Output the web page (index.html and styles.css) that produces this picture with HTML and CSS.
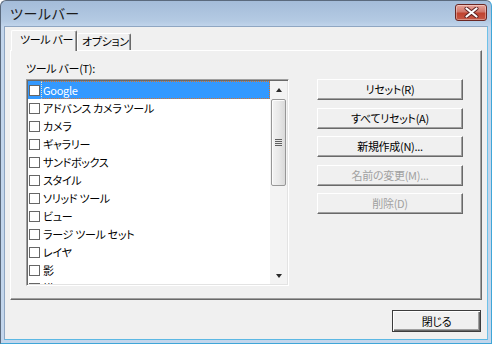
FILE: index.html
```html
<!DOCTYPE html>
<html lang="ja">
<head>
<meta charset="utf-8">
<link rel="stylesheet" href="styles.css">
</head>
<body>
<div class="window">
  <div class="titlebar">
    <span class="title">ツールバー</span>
    <div class="close">
      <svg width="15" height="11" viewBox="0 0 15 11">
        <path d="M2.5 1.5 L12.5 9.5 M12.5 1.5 L2.5 9.5" stroke="#5a2020" stroke-width="4" stroke-linecap="round"/>
        <path d="M2.5 1.5 L12.5 9.5 M12.5 1.5 L2.5 9.5" stroke="#ffffff" stroke-width="2.2" stroke-linecap="round"/>
      </svg>
    </div>
  </div>
  <div class="client">
    <div class="tabs">
      <div class="tab active">ツール バー</div>
      <div class="tab">オプション</div>
    </div>
    <div class="panel">
      <div class="leftcol">
        <div class="label">ツール バー(T):</div>
        <div class="listbox">
          <div class="items">
            <div class="row selected"><span class="cb"></span><span class="txt">Google</span></div>
            <div class="row"><span class="cb"></span><span class="txt">アドバンス カメラ ツール</span></div>
            <div class="row"><span class="cb"></span><span class="txt">カメラ</span></div>
            <div class="row"><span class="cb"></span><span class="txt">ギャラリー</span></div>
            <div class="row"><span class="cb"></span><span class="txt">サンドボックス</span></div>
            <div class="row"><span class="cb"></span><span class="txt">スタイル</span></div>
            <div class="row"><span class="cb"></span><span class="txt">ソリッド ツール</span></div>
            <div class="row"><span class="cb"></span><span class="txt">ビュー</span></div>
            <div class="row"><span class="cb"></span><span class="txt">ラージ ツール セット</span></div>
            <div class="row"><span class="cb"></span><span class="txt">レイヤ</span></div>
            <div class="row"><span class="cb"></span><span class="txt">影</span></div>
            <div class="row"><span class="cb"></span><span class="txt">描画</span></div>
          </div>
          <div class="scrollbar">
            <div class="arrow"><span class="tri up"></span></div>
            <div class="track">
              <div class="thumb"><span class="grip"></span></div>
            </div>
            <div class="arrow"><span class="tri down"></span></div>
          </div>
        </div>
      </div>
      <div class="buttons">
        <div class="btn">リセット(R)</div>
        <div class="btn">すべてリセット(A)</div>
        <div class="btn">新規作成(N)...</div>
        <div class="btn disabled">名前の変更(M)...</div>
        <div class="btn disabled">削除(D)</div>
      </div>
    </div>
    <div class="footer">
      <div class="btn default">閉じる</div>
    </div>
  </div>
</div>
</body>
</html>
```
FILE: styles.css
```css
* { box-sizing: border-box; }
html, body { margin: 0; padding: 0; }
body {
  width: 492px;
  height: 344px;
  overflow: hidden;
  background: #ffffff;
  font-family: "Noto Sans CJK JP", "Noto Sans", sans-serif;
  font-size: 11px;
  color: #000;
}
.window {
  width: 492px;
  height: 344px;
  border: 1px solid #5b6a7d;
  border-right-color: #3fa6d8;
  border-bottom-color: #3fa6d8;
  border-radius: 6px 6px 0 0;
  background: linear-gradient(to bottom, #a4bcd9 0px, #b4cae3 20px, #c3d6ec 26px, #c3d6ec 100%);
  padding: 0 3px 3px 3px;
  display: flex;
  flex-direction: column;
}
.titlebar {
  height: 25px;
  flex: none;
  display: flex;
  align-items: flex-start;
  justify-content: space-between;
  padding-left: 6px;
  padding-right: 1px;
}
.title {
  font-size: 14px;
  line-height: 14px;
  margin-top: 5px;
  color: #1b1b1b;
  font-feature-settings: "palt" 1;
  letter-spacing: 0.6px;
}
.close {
  margin-top: 3px;
  width: 32px;
  height: 17px;
  border: 1px solid #6b2723;
  border-radius: 3px;
  background: linear-gradient(to bottom, #e8a398 0%, #d0786c 45%, #c0432f 55%, #c65846 100%);
  box-shadow: inset 0 0 0 1px rgba(255,255,255,0.35);
  display: flex;
  align-items: center;
  justify-content: center;
}
.client {
  flex: 1;
  background: #f0f0f0;
  border: 1px solid #8fa6c2;
  border-right-color: #6ec1e8;
  border-bottom-color: #5cb8e4;
  display: flex;
  flex-direction: column;
  font-feature-settings: "palt" 1;
  letter-spacing: -0.3px;
}
.tabs {
  display: flex;
  align-items: flex-end;
  height: 23px;
  padding-left: 6px;
  position: relative;
  z-index: 1;
}
.tab {
  height: 17px;
  width: 54px;
  padding: 0 0 0 4px;
  border-top: 1px solid #ffffff;
  border-left: 1px solid #ffffff;
  border-right: 1px solid #696969;
  box-shadow: inset -1px 0 #a0a0a0;
  background: #f0f0f0;
  line-height: 15px;
  white-space: nowrap;
  border-radius: 2px 2px 0 0;
}
.tab.active {
  height: 21px;
  width: 66px;
  margin-bottom: -1px;
  padding: 1px 0 0 8px;
}
.panel {
  margin: 0 5px 0 5px;
  height: 250px;
  border-top: 1px solid #ffffff;
  border-left: 1px solid #ffffff;
  border-right: 1px solid #696969;
  border-bottom: 1px solid #696969;
  box-shadow: inset -1px -1px #a0a0a0;
  display: flex;
  padding: 10px 0 0 15px;
}
.leftcol {
  display: flex;
  flex-direction: column;
}
.label {
  height: 18px;
  line-height: 14px;
  white-space: nowrap;
}
.listbox {
  width: 263px;
  height: 207px;
  border-top: 1px solid #a0a0a0;
  border-left: 1px solid #a0a0a0;
  border-right: 1px solid #ffffff;
  border-bottom: 1px solid #ffffff;
  box-shadow: inset 1px 1px #696969, inset -1px -1px #e3e3e3;
  padding: 1px;
  display: flex;
  background: #ffffff;
}
.items {
  flex: 1;
  overflow: hidden;
  background: #fff;
}
.row {
  height: 18px;
  display: flex;
  align-items: center;
  padding-left: 1px;
}
.cb {
  width: 11px;
  height: 11px;
  border: 1px solid #666666;
  background: #fff;
  flex: none;
  margin-right: 1px;
}
.txt {
  flex: 1;
  height: 18px;
  line-height: 16px;
  padding-left: 1px;
  white-space: nowrap;
  border: 1px solid transparent;
}
.row.selected {
  background: #3399ff;
}
.row.selected .txt {
  color: #fff;
  border: 1px dotted #d9742a;
  border-left-color: #f4e4c8;
}
.scrollbar {
  width: 17px;
  flex: none;
  display: flex;
  flex-direction: column;
  background: #f3f3f3;
}
.arrow {
  height: 17px;
  flex: none;
  display: flex;
  align-items: center;
  justify-content: center;
}
.tri {
  width: 0;
  height: 0;
  border-left: 3.5px solid transparent;
  border-right: 3.5px solid transparent;
}
.tri.up { border-bottom: 4px solid #2a2a2a; }
.tri.down { border-top: 4px solid #2a2a2a; }
.track {
  flex: 1;
  padding: 1px 1px 0 1px;
}
.thumb {
  height: 87px;
  border: 1px solid #979797;
  border-radius: 2px;
  background: linear-gradient(to right, #f3f3f3 0%, #e9e9e9 50%, #dadada 100%);
  box-shadow: inset 1px 1px #fcfcfc;
  display: flex;
  align-items: center;
  justify-content: center;
}
.grip {
  width: 7px;
  height: 7px;
  background: repeating-linear-gradient(to bottom, #5f5f5f 0px, #5f5f5f 1px, #e8e8e8 1px, #e8e8e8 2px);
}
.buttons {
  margin-left: 28px;
  margin-top: 18px;
  display: flex;
  flex-direction: column;
  gap: 7.5px;
}
.btn {
  width: 146px;
  height: 21px;
  border-top: 1px solid #ffffff;
  border-left: 1px solid #ffffff;
  border-right: 1px solid #696969;
  border-bottom: 1px solid #696969;
  box-shadow: inset -1px -1px #a0a0a0;
  background: #f0f0f0;
  display: flex;
  align-items: center;
  justify-content: center;
  line-height: 14px;
  padding-bottom: 1px;
  color: #000;
  white-space: nowrap;
}
.btn.disabled {
  color: #a0a0a0;
}
.footer {
  display: flex;
  justify-content: flex-end;
  padding: 10px 6px 0 0;
}
.btn.default {
  width: 89px;
  height: 22px;
  border: 1px solid #3c3c3c;
  box-shadow: inset 1px 1px #ffffff, inset -1px -1px #696969, inset -2px -2px #a0a0a0;
}
```
